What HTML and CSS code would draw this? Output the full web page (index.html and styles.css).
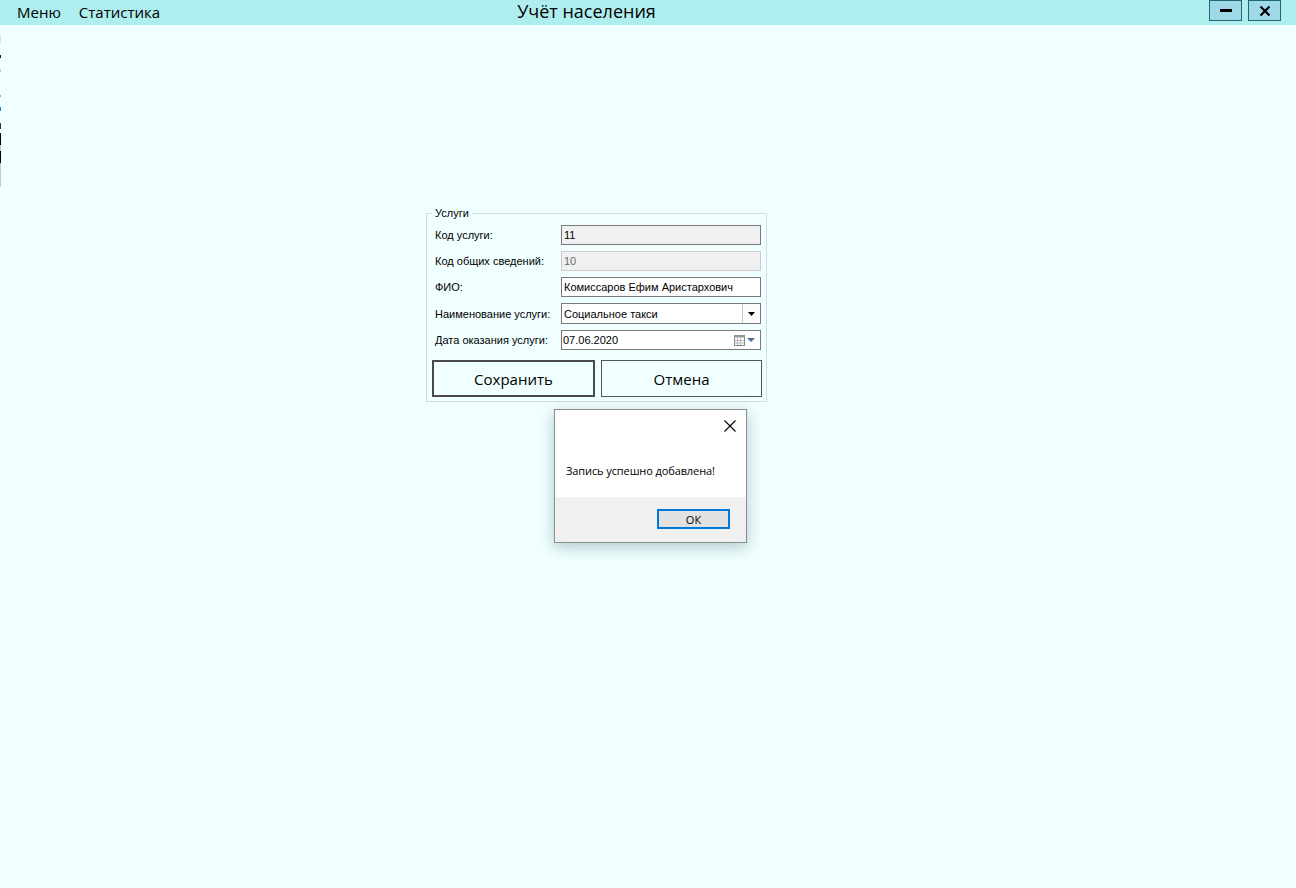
FILE: index.html
```html
<!DOCTYPE html>
<html lang="ru">
<head>
<meta charset="utf-8">
<title>Учёт населения</title>
<link rel="stylesheet" href="styles.css">
</head>
<body>
<header class="titlebar">
  <nav class="menu">
    <span class="menu-item">Меню</span>
    <span class="menu-item">Статистика</span>
  </nav>
  <div class="title">Учёт населения</div>
  <div class="winbtns">
    <button class="winbtn" aria-label="Свернуть"><span class="min-bar"></span></button>
    <button class="winbtn" aria-label="Закрыть">
      <svg width="14" height="14" viewBox="0 0 14 14"><path d="M2.5 2.5 L11.5 11.5 M11.5 2.5 L2.5 11.5" stroke="#000" stroke-width="2.2" fill="none"/></svg>
    </button>
  </div>
</header>
<main class="canvas">
  <div class="edge"></div>
  <section class="group">
    <span class="legend">Услуги</span>
    <div class="row">
      <label class="lbl">Код услуги:</label>
      <div class="field readonly">11</div>
    </div>
    <div class="row">
      <label class="lbl">Код общих сведений:</label>
      <div class="field disabled">10</div>
    </div>
    <div class="row">
      <label class="lbl">ФИО:</label>
      <div class="field">Комиссаров Ефим Аристархович</div>
    </div>
    <div class="row row-combo">
      <label class="lbl">Наименование услуги:</label>
      <div class="field combo">
        <span class="combo-text">Социальное такси</span>
        <span class="combo-btn"><svg width="7" height="4" viewBox="0 0 7 4"><path d="M0 0 H7 L3.5 4 Z" fill="#000"/></svg></span>
      </div>
    </div>
    <div class="row row-date">
      <label class="lbl">Дата оказания услуги:</label>
      <div class="field date">
        <span class="date-text">07.06.2020</span>
        <span class="date-icons">
          <svg width="11" height="11" viewBox="0 0 11 11">
            <rect x="0.5" y="0.5" width="10" height="10" fill="#fff" stroke="#8a8a8a"/>
            <rect x="0.5" y="0.5" width="10" height="2" fill="#9a9a9a"/>
            <path d="M3.5 3 V10 M6.5 3 V10 M1 5.5 H10 M1 8 H10" stroke="#b8b8b8" stroke-width="1"/>
          </svg>
          <svg width="8" height="4" viewBox="0 0 8 4"><path d="M0 0 H8 L4 4 Z" fill="#4d6c8e"/></svg>
        </span>
      </div>
    </div>
    <div class="actions">
      <button class="btn btn-default">Сохранить</button>
      <button class="btn">Отмена</button>
    </div>
  </section>

  <div class="dialog">
    <div class="dialog-body">
      <div class="dialog-close">
        <svg width="12" height="12" viewBox="0 0 12 12"><path d="M0.5 0.5 L11.5 11.5 M11.5 0.5 L0.5 11.5" stroke="#000" stroke-width="1.1" fill="none"/></svg>
      </div>
      <p class="dialog-msg">Запись успешно добавлена!</p>
    </div>
    <div class="dialog-foot">
      <button class="ok">ОК</button>
    </div>
  </div>
</main>
</body>
</html>
```

FILE: styles.css
```css
html, body {
  margin: 0;
  padding: 0;
}
body {
  width: 1296px;
  height: 888px;
  background: #f0ffff;
  font-family: "Liberation Sans", Arial, sans-serif;
  overflow: hidden;
}

/* title bar */
.titlebar {
  height: 25px;
  background: #afeeee;
  display: flex;
  align-items: flex-start;
  padding-left: 17px;
  padding-right: 15px;
  box-sizing: border-box;
}
.menu {
  display: flex;
  gap: 18px;
  padding-top: 3px;
}
.menu-item {
  font-family: "Open Sans", "Noto Sans", sans-serif;
  font-size: 15px;
  line-height: 18px;
  color: #000;
}
.title {
  margin-left: 357px;
  font-family: "Open Sans", "Noto Sans", sans-serif;
  font-size: 18px;
  line-height: 22px;
  color: #000;
}
.winbtns {
  margin-left: auto;
  display: flex;
  gap: 6px;
}
.winbtn {
  width: 33px;
  height: 21px;
  margin: 0;
  padding: 0;
  background: #9fd9e8;
  border: 1px solid #1e6a72;
  display: flex;
  align-items: center;
  justify-content: center;
}
.min-bar {
  display: block;
  width: 12px;
  height: 3px;
  background: #000;
}

/* canvas */
.canvas {
  position: relative;
  height: 863px;
  padding-top: 188px;
  padding-left: 426px;
  box-sizing: border-box;
}
.edge {
  position: absolute;
  left: 0;
  top: 10px;
  width: 1px;
  height: 152px;
  background: linear-gradient(#dcdcdc 0 8px, transparent 8px 20px, #1a1a1a 20px 23px, transparent 23px 34px, #c8c8c8 34px 37px, transparent 37px 60px, #aaa 60px 62px, transparent 62px 72px, #2a7fd4 72px 76px, transparent 76px 88px, #333 88px 94px, transparent 94px 98px, #000 98px 110px, #c9c9c9 110px 116px, #000 116px 128px, #c9c9c9 128px 152px);
}

.group {
  position: relative;
  width: 341px;
  height: 189px;
  box-sizing: border-box;
  border: 1px solid #d3dde0;
  padding: 11px 4px 0 5px;
}
.legend {
  position: absolute;
  top: -7px;
  left: 5px;
  padding: 0 3px;
  background: #f0ffff;
  font-size: 11px;
  line-height: 12px;
  color: #000;
}
.row {
  display: flex;
  align-items: center;
  height: 20px;
  margin-bottom: 6px;
}
.row-combo {
  height: 21px;
  margin-bottom: 6px;
}
.row-date {
  margin-bottom: 10px;
}
.lbl {
  width: 129px;
  padding-left: 3px;
  box-sizing: border-box;
  font-size: 11px;
  color: #000;
  white-space: nowrap;
}
.field {
  width: 200px;
  height: 100%;
  box-sizing: border-box;
  border: 1px solid #7a7a7a;
  background: #fff;
  font-size: 11px;
  line-height: 18px;
  padding-left: 2px;
  color: #000;
  display: flex;
  align-items: center;
}
.field.readonly {
  background: #f0f0f0;
}
.field.disabled {
  background: #f0f0f0;
  border-color: #cccccc;
  color: #6d6d6d;
}
.combo-text {
  flex: 1;
}
.combo-btn {
  width: 17px;
  height: 100%;
  border-left: 1px solid #c8c8c8;
  display: flex;
  align-items: center;
  justify-content: center;
  background: #fcfcfc;
}
.date {
  padding-left: 1px;
}
.date-text {
  flex: 1;
}
.date-icons {
  display: flex;
  align-items: center;
  gap: 2px;
  padding-right: 5px;
}

.actions {
  display: flex;
  gap: 6px;
}
.btn {
  height: 37px;
  width: 161px;
  margin: 0;
  padding: 0;
  box-sizing: border-box;
  background: #f0ffff;
  border: 1px solid #555;
  font-family: "Open Sans", "Noto Sans", sans-serif;
  font-size: 15px;
  color: #000;
}
.btn-default {
  width: 163px;
  border: 2px solid #4a4a4a;
}

/* dialog */
.dialog {
  position: absolute;
  left: 554px;
  top: 384px;
  width: 193px;
  height: 134px;
  box-sizing: border-box;
  border: 1px solid #8d8d8d;
  background: #fff;
  box-shadow: 0 4px 14px rgba(0, 60, 70, 0.28);
  display: flex;
  flex-direction: column;
}
.dialog-body {
  position: relative;
  height: 87px;
  padding-left: 11px;
}
.dialog-close {
  position: absolute;
  right: 10px;
  top: 8px;
  width: 12px;
  height: 12px;
}
.dialog-msg {
  margin: 0;
  padding-top: 53px;
  font-family: "Open Sans", "Noto Sans", sans-serif;
  font-size: 11px;
  line-height: 15px;
  letter-spacing: -0.1px;
  color: #000;
}
.dialog-foot {
  flex: 1;
  background: #f0f0f0;
  display: flex;
  justify-content: flex-end;
  align-items: flex-start;
  padding: 12px 16px 0 0;
}
.ok {
  width: 73px;
  height: 20px;
  margin: 0;
  padding: 0;
  box-sizing: border-box;
  border: 2px solid #0078d7;
  background: #e1e1e1;
  font-family: "Open Sans", "Noto Sans", sans-serif;
  font-size: 11px;
  color: #000;
}
```
